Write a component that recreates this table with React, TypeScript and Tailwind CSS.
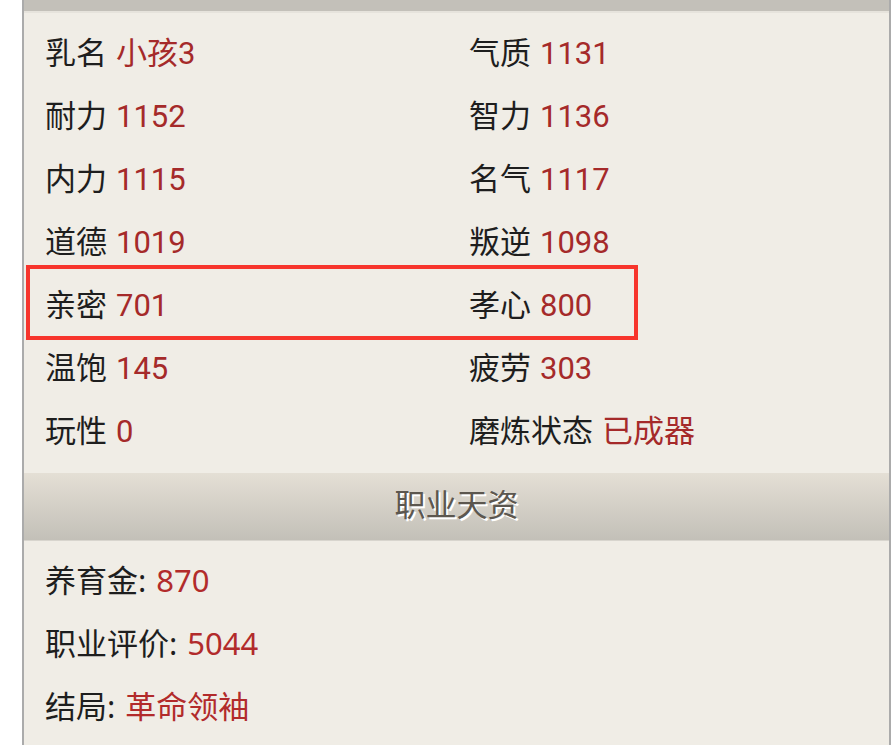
import React from "react";

const font = { fontFamily: '"Roboto", "Noto Sans CJK SC", sans-serif' };

function Stat({ label, value }: { label: string; value: string }) {
  return (
    <div className="flex items-center h-[63px] whitespace-nowrap">
      <span className="text-[#1e1e1e]">{label}</span>
      <span className="text-[#a52a2a] ml-[9px]">{value}</span>
    </div>
  );
}

const stats: [string, string, string, string][] = [
  ["乳名", "小孩3", "气质", "1131"],
  ["耐力", "1152", "智力", "1136"],
  ["内力", "1115", "名气", "1117"],
  ["道德", "1019", "叛逆", "1098"],
  ["亲密", "701", "孝心", "800"],
  ["温饱", "145", "疲劳", "303"],
  ["玩性", "0", "磨炼状态", "已成器"],
];

export default function App() {
  return (
    <div className="w-[893px] h-[745px] bg-white flex overflow-hidden" style={font}>
      <div className="w-[22px] shrink-0 bg-white" />
      <div className="w-[869px] shrink-0 border-l-2 border-r-2 border-[#ababab] bg-[#f0ede6] flex flex-col relative">
        <div className="h-[13px] bg-[#c3c0b9] border-b-2 border-[#e6e3dc]" />
        <div className="pt-[10px] pb-[9px] pl-[21px] text-[31px]">
          {stats.map(([l1, v1, l2, v2]) => (
            <div key={l1} className="grid grid-cols-[424px_1fr]">
              <Stat label={l1} value={v1} />
              <Stat label={l2} value={v2} />
            </div>
          ))}
        </div>
        <div className="h-[68px] bg-gradient-to-b from-[#e4dfd5] to-[#c3c0b8] flex items-center justify-center border-b border-[#d8d5ce]">
          <span
            className="text-[31px] text-[#5c574f]"
            style={{ textShadow: "2px 2px 0 #ffffff" }}
          >
            职业天资
          </span>
        </div>
        <div className="pt-[8px] pl-[21px] text-[31px]" style={{ fontFamily: '"Noto Sans", "Noto Sans CJK SC", sans-serif' }}>
          <div className="flex items-center h-[63px] whitespace-nowrap">
            <span className="text-[#1e1e1e]">养育金:</span>
            <span className="text-[#b22b2b] ml-[10px]">870</span>
          </div>
          <div className="flex items-center h-[63px] whitespace-nowrap">
            <span className="text-[#1e1e1e]">职业评价:</span>
            <span className="text-[#b22b2b] ml-[10px]">5044</span>
          </div>
          <div className="flex items-center h-[63px] whitespace-nowrap">
            <span className="text-[#1e1e1e]">结局:</span>
            <span className="text-[#b22b2b] ml-[10px]">革命领袖</span>
          </div>
        </div>
        <div className="absolute left-[2px] top-[265px] w-[612px] h-[75px] border-[4px] border-[#f7352c] pointer-events-none" />
      </div>
      <div className="flex-1 bg-white" />
    </div>
  );
}
